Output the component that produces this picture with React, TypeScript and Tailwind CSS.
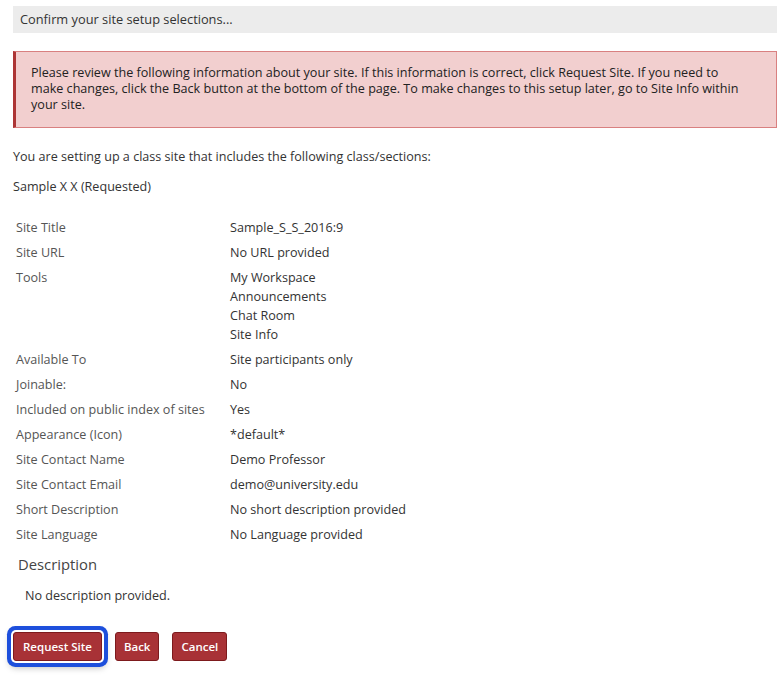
import React from 'react'

type Row = { label: string; values: string[] }

const rows: Row[] = [
  { label: 'Site Title', values: ['Sample_S_S_2016:9'] },
  { label: 'Site URL', values: ['No URL provided'] },
  { label: 'Tools', values: ['My Workspace', 'Announcements', 'Chat Room', 'Site Info'] },
  { label: 'Available To', values: ['Site participants only'] },
  { label: 'Joinable:', values: ['No'] },
  { label: 'Included on public index of sites', values: ['Yes'] },
  { label: 'Appearance (Icon)', values: ['*default*'] },
  { label: 'Site Contact Name', values: ['Demo Professor'] },
  { label: 'Site Contact Email', values: ['demo@university.edu'] },
  { label: 'Short Description', values: ['No short description provided'] },
  { label: 'Site Language', values: ['No Language provided'] },
]

function Btn({ children, focused }: { children: React.ReactNode; focused?: boolean }) {
  return (
    <button
      className={
        focused
          ? 'h-[29px] px-[9px] rounded-[3px] bg-[#a83236] border border-[#7d1a1d] text-white text-[11.5px] font-semibold leading-none shadow-[0_0_0_2px_#ffffff,0_0_0_6px_#1d4fdc,0_3px_6px_4px_rgba(0,0,0,0.25)]'
          : 'h-[29px] px-[8px] rounded-[3px] bg-[#a83236] border border-[#7d1a1d] text-white text-[11.5px] font-semibold leading-none'
      }
    >
      {children}
    </button>
  )
}

export default function App() {
  return (
    <div className="bg-white min-h-screen pl-[13px] pr-[6px] pt-[6px] text-[12.6px] text-[#333] font-['Open_Sans',sans-serif]">
      <div className="h-[27px] bg-[#ececec] px-[7px] flex items-center text-[12.8px] text-[#333]">
        Confirm your site setup selections...
      </div>

      <div className="mt-[18px] bg-[#f2cfcf] border border-[#d98080] border-l-[3px] border-l-[#ad3535] pl-[15px] pr-[12px] pt-[13px] pb-[14px] text-[12.6px] leading-[16px] text-[#222]">
        Please review the following information about your site. If this information is correct, click Request Site. If you need to
        <br />
        make changes, click the Back button at the bottom of the page. To make changes to this setup later, go to Site Info within
        <br />
        your site.
      </div>

      <p className="mt-[19px] leading-[19px]">You are setting up a class site that includes the following class/sections:</p>
      <p className="mt-[11px] leading-[19px]">Sample X X (Requested)</p>

      <table className="mt-[19px] border-collapse">
        <tbody>
          {rows.map((r) => (
            <tr key={r.label}>
              <td className="align-top py-[3px] pl-[3px] w-[214px] leading-[19px] text-[#555]">{r.label}</td>
              <td className="align-top py-[3px] pl-[3px] leading-[19px] text-[#333]">
                {r.values.map((v) => (
                  <div key={v}>{v}</div>
                ))}
              </td>
            </tr>
          ))}
        </tbody>
      </table>

      <h3 className="mt-[7px] ml-[5px] text-[14.8px] leading-[20px] text-[#444] font-normal">Description</h3>
      <p className="mt-[12px] ml-[12px] leading-[19px]">No description provided.</p>

      <div className="mt-[27px] flex items-center gap-[13px]">
        <Btn focused>Request Site</Btn>
        <Btn>Back</Btn>
        <Btn>Cancel</Btn>
      </div>
    </div>
  )
}
